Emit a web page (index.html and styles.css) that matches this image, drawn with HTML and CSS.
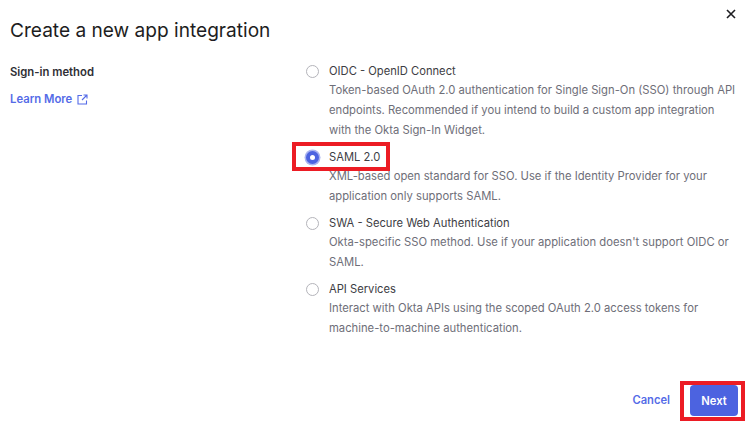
FILE: index.html
```html
<!DOCTYPE html>
<html lang="en">
<head>
<meta charset="utf-8">
<title>Create a new app integration</title>
<link rel="stylesheet" href="styles.css">
</head>
<body>
<div class="dialog">
  <button class="close" aria-label="Close">
    <svg width="10" height="10" viewBox="0 0 10 10"><path d="M1 1l8 8M9 1l-8 8" stroke="#1d1d21" stroke-width="1.6" fill="none"/></svg>
  </button>
  <h1 class="title">Create a new app integration</h1>
  <div class="body">
    <div class="side">
      <div class="side-label">Sign-in method</div>
      <a class="learn">Learn More
        <svg width="11" height="11" viewBox="0 0 11 11" fill="none" stroke="#546be7" stroke-width="1.1"><path d="M5 1.500H1v8.500h8.500V6.500"/><path d="M6.500 1h3.500v3.500M10 1L5 6"/></svg>
      </a>
    </div>
    <div class="options">
      <div class="option">
        <span class="radio"></span>
        <div class="opt-text">
          <div class="opt-label">OIDC - OpenID Connect</div>
          <p class="opt-desc">Token-based OAuth 2.0 authentication for Single Sign-On (SSO) through API endpoints. Recommended if you intend to build a custom app integration with the Okta Sign-In Widget.</p>
        </div>
      </div>
      <div class="option">
        <span class="radio radio-on"></span>
        <span class="mark-saml"></span>
        <div class="opt-text">
          <div class="opt-label">SAML 2.0</div>
          <p class="opt-desc">XML-based open standard for SSO. Use if the Identity Provider for your application only supports SAML.</p>
        </div>
      </div>
      <div class="option">
        <span class="radio"></span>
        <div class="opt-text">
          <div class="opt-label">SWA - Secure Web Authentication</div>
          <p class="opt-desc">Okta-specific SSO method. Use if your application doesn't support OIDC or SAML.</p>
        </div>
      </div>
      <div class="option">
        <span class="radio"></span>
        <div class="opt-text">
          <div class="opt-label">API Services</div>
          <p class="opt-desc">Interact with Okta APIs using the scoped OAuth 2.0 access tokens for machine-to-machine authentication.</p>
        </div>
      </div>
    </div>
  </div>
  <div class="footer">
    <a class="cancel">Cancel</a>
    <span class="next-wrap"><button class="next">Next</button></span>
  </div>
</div>
</body>
</html>
```
FILE: styles.css
```css
* { box-sizing: border-box; }
html, body { margin: 0; height: 100%; background: #fff; }
body { font-family: Inter, "Liberation Sans", sans-serif; color: #1d1d21; overflow: hidden; }
.dialog { position: relative; width: 751px; height: 442px; padding: 19px 0 0 10px; display: flex; flex-direction: column; }
.close { position: absolute; top: 8px; right: 14px; width: 12px; height: 12px; padding: 1px; border: 0; background: none; display: flex; }
.title { margin: 0; font-size: 19.100px; line-height: 23px; font-weight: 400; color: #1d1d21; }
.body { display: flex; margin-top: 21px; }
.side { width: 296px; flex: none; }
.side-label { font-size: 11.300px; line-height: 14px; font-weight: 600; color: #2f2f35; margin-top: 2px; }
.learn { display: flex; align-items: center; gap: 5px; margin-top: 13px; font-size: 11.300px; line-height: 14px; font-weight: 600; color: #546be7; }
.options { display: flex; flex-direction: column; width: 431px; }
.option { position: relative; display: flex; gap: 10px; margin-bottom: 9px; }
.radio { width: 13px; height: 13px; margin-top: 2px; border: 1px solid #b4b4ba; border-radius: 50%; flex: none; background: #fff; }
.radio-on { border: 4px solid #4c63e0; box-shadow: 0 0 0 1.500px #aab4f0; }
.opt-text { flex: 1; }
.opt-label { font-size: 11.200px; line-height: 16px; color: #3d3d44; }
.opt-desc { margin: 1px 0 0; font-size: 11.250px; line-height: 20px; color: #6e6e78; }
.mark-saml { position: absolute; left: -14px; top: -7px; width: 98px; height: 29px; border: 4px solid #ec1c24; }
.footer { position: absolute; right: 6px; top: 381px; display: flex; align-items: center; gap: 10px; }
.cancel { font-size: 11.200px; font-weight: 600; color: #546be7; margin-bottom: 2px; }
.next-wrap { border: 4px solid #ec1c24; padding: 0 3px 1px 6px; display: flex; }
.next { width: 48px; height: 31px; border: 0; border-radius: 4px; background: #4c63e0; color: #fff; font: 600 11.200px Inter, "Liberation Sans", sans-serif; padding: 0; }
```
